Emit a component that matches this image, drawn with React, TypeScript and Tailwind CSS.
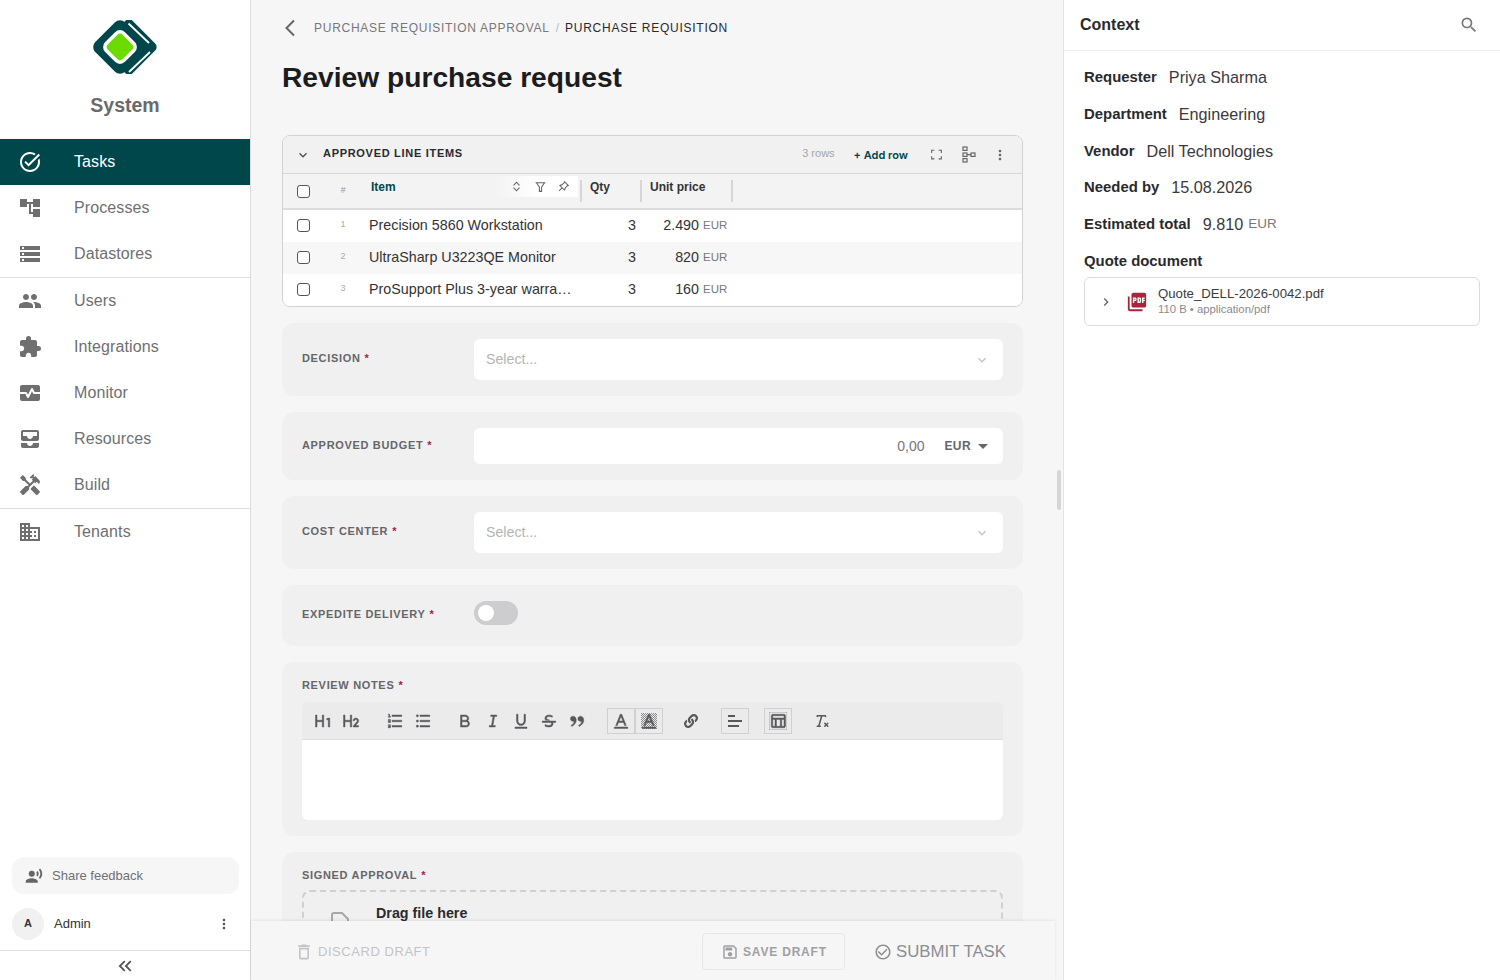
import React from "react";
import { FaLink } from "react-icons/fa";
import {
  MdAccountTree,
  MdAllInbox,
  MdCheckCircleOutline,
  MdDomain,
  MdExtension,
  MdHandyman,
  MdKeyboardArrowDown,
  MdKeyboardArrowRight,
  MdKeyboardDoubleArrowLeft,
  MdMonitorHeart,
  MdMoreVert,
  MdOutlineDelete,
  MdOutlineSave,
  MdOutlineTableChart,
  MdOutlineTaskAlt,
  MdPeople,
  MdPictureAsPdf,
  MdRecordVoiceOver,
  MdSearch,
  MdStorage,
} from "react-icons/md";
import {
  RiBold,
  RiDoubleQuotesR,
  RiExpandUpDownLine,
  RiFilterLine,
  RiFontColor,
  RiFullscreenLine,
  RiH1,
  RiH2,
  RiItalic,
  RiListOrdered,
  RiListUnordered,
  RiPushpinLine,
  RiStrikethrough,
  RiUnderline,
} from "react-icons/ri";
import { TbClearFormatting } from "react-icons/tb";

const navGroups = [
  [
    { label: "Tasks", icon: MdOutlineTaskAlt, active: true },
    { label: "Processes", icon: MdAccountTree },
    { label: "Datastores", icon: MdStorage },
  ],
  [
    { label: "Users", icon: MdPeople },
    { label: "Integrations", icon: MdExtension },
    { label: "Monitor", icon: MdMonitorHeart },
    { label: "Resources", icon: MdAllInbox },
    { label: "Build", icon: MdHandyman },
  ],
  [{ label: "Tenants", icon: MdDomain }],
];

const rows = [
  { n: 1, item: "Precision 5860 Workstation", qty: 3, price: "2.490" },
  { n: 2, item: "UltraSharp U3223QE Monitor", qty: 3, price: "820" },
  { n: 3, item: "ProSupport Plus 3-year warranty", qty: 3, price: "160" },
];

const context = [
  { label: "Requester", value: "Priya Sharma" },
  { label: "Department", value: "Engineering" },
  { label: "Vendor", value: "Dell Technologies" },
  { label: "Needed by", value: "15.08.2026" },
];

const Logo = () => (
  <svg width="64" height="54" viewBox="0 0 64 54">
    {/* rear diamond, only its right edge shows */}
    <rect x="15" y="6" width="42" height="42" rx="5" transform="rotate(45 36 27)" fill="#00474c" />
    <path d="M35.5 3.5 L56 23" stroke="#ffffff" strokeWidth="1.8" fill="none" />
    <path d="M57 32 L36 52" stroke="#ffffff" strokeWidth="1.8" fill="none" />
    <rect x="6" y="6" width="42" height="42" rx="7" transform="rotate(45 27 27)" fill="#00474c" />
    <rect x="13" y="13" width="28" height="28" rx="7" transform="rotate(45 27 27)" fill="#ffffff" />
    <rect x="16.5" y="16.5" width="21" height="21" rx="4" transform="rotate(45 27 27)" fill="#6cdc00" />
  </svg>
);

const Sidebar = () => (
  <aside className="w-[251px] h-full shrink-0 flex flex-col bg-white border-r border-[#dcdcdc]">
    <div className="h-[138px] flex flex-col items-center pt-[20px] shrink-0">
      <Logo />
      <div className="mt-[19px] text-[19.5px] leading-6 font-bold text-[#6a6a6c]">System</div>
    </div>
    <nav className="shrink-0">
      {navGroups.map((group, i) => (
        <div key={i} className={i < 2 ? "border-b border-[#dedede]" : ""}>
          {group.map((entry) => {
            const Icon = entry.icon;
            return (
              <div
                key={entry.label}
                className={
                  entry.active
                    ? "h-[46px] mt-px flex items-center pl-[18px] bg-[#00474c] text-white"
                    : "h-[46px] flex items-center pl-[18px] text-[#6f6f71]"
                }
              >
                <Icon size={24} />
                <span className="ml-[32px] text-[16px] tracking-[0.1px]">{entry.label}</span>
              </div>
            );
          })}
        </div>
      ))}
    </nav>
    <div className="mt-auto pl-3 pr-[11px]">
      <div className="h-[37px] rounded-xl bg-[#f6f6f7] flex items-center pl-[13px] text-[13px] text-[#707072]">
        <MdRecordVoiceOver size={18} className="text-[#666668]" />
        <span className="ml-[9px]">Share feedback</span>
      </div>
      <div className="mt-[11px] h-[37px] flex items-center">
        <div className="w-8 h-8 rounded-full bg-[#f1f1f2] flex items-center justify-center text-[11px] font-bold text-[#333]">
          A
        </div>
        <span className="ml-[10px] text-[13px] text-[#333]">Admin</span>
        <MdMoreVert size={16} className="ml-auto mr-[7px] text-[#555]" />
      </div>
    </div>
    <div className="mt-[8px] h-[30px] border-t border-[#dedede] flex items-center justify-center shrink-0">
      <MdKeyboardDoubleArrowLeft size={22} className="text-[#555]" />
    </div>
  </aside>
);

const Required = () => <span className="ml-[4px] text-[#a3214a]">*</span>;

const FieldLabel = ({ children, className = "" }: { children: React.ReactNode; className?: string }) => (
  <div className={`text-[11px] leading-4 font-bold tracking-[0.67px] text-[#666668] ${className}`}>
    {children}
    <Required />
  </div>
);

const Card = ({ children, className = "" }: { children: React.ReactNode; className?: string }) => (
  <div className={`rounded-xl bg-[#f0f0f1] px-5 ${className}`}>{children}</div>
);

const SelectField = ({ label }: { label: string }) => (
  <Card className="py-4 flex items-center">
    <FieldLabel className="w-[172px] shrink-0 -mt-[3px]">{label}</FieldLabel>
    <div className="flex-1 h-[41px] rounded-md bg-white flex items-center justify-between pl-3 pr-[13px] text-[14.2px] text-[#b4b4b6]">
      Select...
      <MdKeyboardArrowDown size={16} className="text-[#c4c4c6]" />
    </div>
  </Card>
);

const TreeIcon = () => (
  <svg width="14" height="17" viewBox="0 0 14 17" fill="none" stroke="#666" strokeWidth="1.2" className="ml-[19px]">
    <rect x="1" y="1" width="4" height="3.4" />
    <rect x="1" y="7" width="4" height="3.4" />
    <rect x="1" y="12.6" width="4" height="3.4" />
    <rect x="9" y="7" width="4" height="3.4" />
    <path d="M5 8.7h4" />
  </svg>
);

const RowSelect = ({ children }: { children: React.ReactNode }) => (
  <div className="w-[78px] shrink-0 flex items-center">
    <span className="ml-[14px] w-[13px] h-[13px] rounded-[3px] border border-[#555] bg-white shrink-0" />
    <span className="ml-[29px] w-[8px] text-center text-[9px] text-[#aaa]">{children}</span>
  </div>
);

const LineItems = () => (
  <div className="rounded-lg border border-[#d2d2d4] overflow-hidden bg-white">
    <div className="h-[38px] bg-[#f1f1f2] border-b border-[#d8d8da] flex items-center">
      <MdKeyboardArrowDown size={16} className="ml-[12px] text-[#555]" />
      <span className="ml-[12px] -mt-[2px] text-[11px] font-bold tracking-[0.7px] text-[#2a2a2c]">
        APPROVED LINE ITEMS
      </span>
      <span className="ml-auto -mt-[2px] text-[11px] text-[#a6a6a8]">3 rows</span>
      <span className="ml-[19px] mt-[1px] text-[11px] font-semibold text-[#00474c] font-['Inter',sans-serif]">
        + Add row
      </span>
      <RiFullscreenLine size={13} className="ml-[22px] text-[#666]" />
      <TreeIcon />
      <MdMoreVert size={16} className="ml-[16px] mr-[14px] text-[#666]" />
    </div>
    <div className="h-[36px] bg-[#f3f3f4] border-b-2 border-[#dcdcde] flex items-center">
      <RowSelect>
        <span className="italic text-[#999]">#</span>
      </RowSelect>
      <div className="w-[221px] shrink-0 h-[22px] flex items-center border-r-2 border-[#d6d6d8]">
        <span className="ml-[10px] -mt-[8px] text-[12px] font-bold text-[#00474c]">Item</span>
        <div className="ml-auto mr-[2px] -mt-[9px] w-[84px] h-[21px] bg-gradient-to-r from-transparent via-white to-white flex items-center justify-end gap-[10.5px] pr-[8px] text-[#666]">
          <RiExpandUpDownLine size={13} />
          <RiFilterLine size={13} />
          <RiPushpinLine size={13} />
        </div>
      </div>
      <div className="w-[60px] shrink-0 h-[22px] flex items-center border-r-2 border-[#d6d6d8]">
        <span className="ml-[8px] -mt-[8px] text-[12px] font-bold text-[#333]">Qty</span>
      </div>
      <div className="w-[91px] shrink-0 h-[22px] flex items-center border-r-2 border-[#d6d6d8]">
        <span className="ml-[8px] -mt-[8px] text-[12px] font-bold text-[#333]">Unit price</span>
      </div>
    </div>
    {rows.map((row, i) => (
      <div
        key={row.n}
        className={`h-[32px] pb-[2px] flex items-center text-[14.3px] text-[#333] ${i === 1 ? "bg-[#f7f7f8]" : "bg-white"}`}
      >
        <RowSelect>{row.n}</RowSelect>
        <div className="w-[221px] shrink-0 pl-[8px] pr-[8px] pt-[2px] truncate">{row.item}</div>
        <div className="w-[54px] shrink-0 pt-[2px] text-right">{row.qty}</div>
        <div className="w-[63px] shrink-0 pt-[2px] text-right">{row.price}</div>
        <div className="ml-[4px] pt-[2px] text-[11.5px] text-[#77777a]">EUR</div>
      </div>
    ))}
  </div>
);

const ToolBtn = ({
  icon: Icon,
  size = 18,
  className = "",
}: {
  icon: React.ComponentType<{ size?: number }>;
  size?: number;
  className?: string;
}) => (
  <span
    className={`w-[28px] h-[26px] shrink-0 flex items-center justify-center text-[#58585a] [&_svg]:stroke-[0.6px] ${className}`}
  >
    <Icon size={size} />
  </span>
);

const boxed = "border border-[#d0d0d2]";

const AlignIcon = () => (
  <svg width="16" height="14" viewBox="0 0 16 14" stroke="currentColor" strokeWidth="1.8">
    <path d="M1 2h7M1 7h14M1 12h11" />
  </svg>
);

// hatched square with the letter icon on top
const HighlightBtn = () => (
  <span className={`relative w-[28px] h-[26px] shrink-0 flex items-center justify-center text-[#58585a] ${boxed}`}>
    <svg width="16" height="16" viewBox="0 0 16 16">
      <defs>
        <pattern id="hatch" width="2" height="2" patternUnits="userSpaceOnUse">
          <rect width="1" height="1" fill="#8a8a8c" />
          <rect x="1" y="1" width="1" height="1" fill="#8a8a8c" />
        </pattern>
      </defs>
      <rect width="16" height="16" fill="url(#hatch)" />
    </svg>
    <span className="absolute inset-0 flex items-center justify-center [&_svg]:stroke-[0.6px]">
      <RiFontColor size={18} />
    </span>
  </span>
);

const Toolbar = () => (
  <div className="h-[38px] bg-[#ebebec] border-b border-[#dedee0] rounded-t-md flex items-center pl-[7px]">
    <ToolBtn icon={RiH1} />
    <ToolBtn icon={RiH2} />
    <ToolBtn icon={RiListOrdered} className="ml-[16px]" />
    <ToolBtn icon={RiListUnordered} />
    <ToolBtn icon={RiBold} className="ml-[14px]" />
    <ToolBtn icon={RiItalic} />
    <ToolBtn icon={RiUnderline} />
    <ToolBtn icon={RiStrikethrough} />
    <ToolBtn icon={RiDoubleQuotesR} />
    <ToolBtn icon={RiFontColor} className={`ml-[16px] ${boxed}`} />
    <HighlightBtn />
    <ToolBtn icon={FaLink} size={14} className="ml-[14px]" />
    <span className={`ml-[16px] w-[28px] h-[26px] shrink-0 flex items-center justify-center text-[#58585a] ${boxed}`}>
      <AlignIcon />
    </span>
    <ToolBtn icon={MdOutlineTableChart} className={`ml-[15px] ${boxed}`} />
    <span className="ml-[15px] w-[28px] h-[26px] shrink-0 flex items-center justify-center text-[#58585a]">
      <TbClearFormatting size={18} />
    </span>
  </div>
);

const MainColumn = () => (
  <main className="flex-1 min-w-0 h-full flex flex-col">
    <div className="flex-1 min-h-0 overflow-hidden pl-[31px] pr-[32px]">
      <div className="h-[56px] pt-[18px] flex items-start">
        <svg width="12" height="18" viewBox="0 0 12 18" fill="none" stroke="#666668" strokeWidth="2" className="ml-[2px] mt-[1px]">
          <path d="M10 1.5 2.5 9l7.5 7.5" />
        </svg>
        <span className="ml-[18px] text-[12px] leading-5 tracking-[0.73px] text-[#77777a]">
          PURCHASE REQUISITION APPROVAL
        </span>
        <span className="mx-[6px] text-[12px] leading-5 text-[#bbb]">/</span>
        <span className="text-[12px] leading-5 tracking-[0.75px] text-[#2a2a2c]">PURCHASE REQUISITION</span>
      </div>
      <h1 className="h-[79px] text-[28.2px] leading-[42px] font-bold text-[#1c1c1e]">Review purchase request</h1>
      <LineItems />
      <div className="mt-[16px] flex flex-col gap-[16px]">
        <SelectField label="DECISION" />
        <Card className="py-4 flex items-center">
          <FieldLabel className="w-[172px] shrink-0 -mt-[3px]">APPROVED BUDGET</FieldLabel>
          <div className="flex-1 h-[36px] rounded-md bg-white flex items-center justify-end pr-[15px]">
            <span className="text-[14px] text-[#77777a]">0,00</span>
            <span className="ml-[20px] text-[12px] font-bold tracking-[0.4px] text-[#666668]">EUR</span>
            <span className="ml-[7px] w-0 h-0 border-x-[5px] border-x-transparent border-t-[5px] border-t-[#666668]" />
          </div>
        </Card>
        <SelectField label="COST CENTER" />
        <Card className="h-[61px] flex items-center">
          <FieldLabel className="w-[172px] shrink-0 -mt-[4px]">EXPEDITE DELIVERY</FieldLabel>
          <div className="w-[44px] h-[24px] rounded-full bg-[#cdcdcf] flex items-center pl-[4px] -mt-[5px]">
            <span className="w-[16px] h-[16px] rounded-full bg-white" />
          </div>
        </Card>
        <Card className="h-[174px] pt-[15px]">
          <FieldLabel>REVIEW NOTES</FieldLabel>
          <div className="mt-[9px]">
            <Toolbar />
            <div className="h-[80px] bg-white rounded-b-md" />
          </div>
        </Card>
        <Card className="h-[200px] pt-[15px]">
          <FieldLabel>SIGNED APPROVAL</FieldLabel>
          <div className="mt-[7px] h-[120px] rounded-lg border-2 border-dashed border-[#d0d0d2] flex items-start pl-[26px] pt-[11px]">
            <svg width="20" height="24" viewBox="0 0 20 24" className="mt-[8px] text-[#a8a8aa]">
              <path d="M2 22V4a2 2 0 0 1 2-2h8l6 6v14" fill="none" stroke="currentColor" strokeWidth="2" />
            </svg>
            <span className="ml-[26px] text-[14.3px] leading-5 font-bold text-[#2a2a2c]">Drag file here</span>
          </div>
        </Card>
      </div>
    </div>
    <div className="h-[59px] shrink-0 bg-[#f6f6f7] shadow-[0_-1px_3px_rgba(0,0,0,0.08)] relative flex items-center pl-[43px] pr-[49px] pt-[2px]">
      <MdOutlineDelete size={20} className="text-[#c4c4c6]" />
      <span className="ml-[4px] text-[13px] tracking-[0.55px] text-[#c4c4c6]">DISCARD DRAFT</span>
      <div className="ml-auto h-[37px] w-[143px] rounded border border-[#e6e6e8] flex items-center justify-center pl-[1px]">
        <MdOutlineSave size={18} className="text-[#a0a0a2]" />
        <span className="ml-[4px] text-[12px] font-bold tracking-[0.8px] text-[#a0a0a2]">SAVE DRAFT</span>
      </div>
      <MdCheckCircleOutline size={18} className="ml-[29px] text-[#8d8d8f]" />
      <span className="ml-[4px] text-[16.8px] text-[#8d8d8f]">SUBMIT TASK</span>
    </div>
  </main>
);

const ContextPanel = () => (
  <aside className="w-[437px] h-full shrink-0 bg-white border-l border-[#e4e4e6]">
    <div className="h-[51px] border-b border-[#eeeeef] flex items-center justify-between pl-[16px] pr-[21px]">
      <span className="text-[16px] font-bold text-[#2a2a2c]">Context</span>
      <MdSearch size={20} className="text-[#77777a]" />
    </div>
    <div className="px-[20px] pt-[8px]">
      {context.map((entry) => (
        <div key={entry.label} className={`flex items-center ${entry.label === "Vendor" ? "h-[36px]" : "h-[37px]"}`}>
          <span className="text-[14.9px] font-bold text-[#2a2a2c]">{entry.label}</span>
          <span className="ml-[12px] text-[16.2px] text-[#3a3a3c]">{entry.value}</span>
        </div>
      ))}
      <div className="h-[37px] flex items-center">
        <span className="text-[14.9px] font-bold text-[#2a2a2c]">Estimated total</span>
        <span className="ml-[12px] text-[16.2px] text-[#3a3a3c]">9.810</span>
        <span className="ml-[5px] text-[13.5px] text-[#77777a]">EUR</span>
      </div>
      <div className="h-[36px] flex items-center text-[14.9px] font-bold text-[#2a2a2c]">Quote document</div>
      <div className="-mt-[2px] h-[49px] rounded-md border border-[#dcdcde] flex items-center pl-[13px]">
        <MdKeyboardArrowRight size={16} className="text-[#666]" />
        <MdPictureAsPdf size={22} className="ml-[12px] text-[#a6263c]" />
        <div className="ml-[10px] -mt-[2px]">
          <div className="text-[13.2px] leading-4 text-[#3a3a3c]">Quote_DELL-2026-0042.pdf</div>
          <div className="text-[11.3px] leading-[14px] text-[#8a8a8c]">110 B • application/pdf</div>
        </div>
      </div>
    </div>
  </aside>
);

export default function App() {
  return (
    <div className="w-[1500px] h-[980px] overflow-hidden flex bg-[#f6f6f7] font-['Liberation_Sans',sans-serif]">
      <Sidebar />
      <MainColumn />
      <div className="w-[8px] shrink-0 h-full pt-[470px] pl-[2px]">
        <div className="w-[4px] h-[40px] rounded-full bg-[#d6d6d8]" />
      </div>
      <ContextPanel />
    </div>
  );
}
